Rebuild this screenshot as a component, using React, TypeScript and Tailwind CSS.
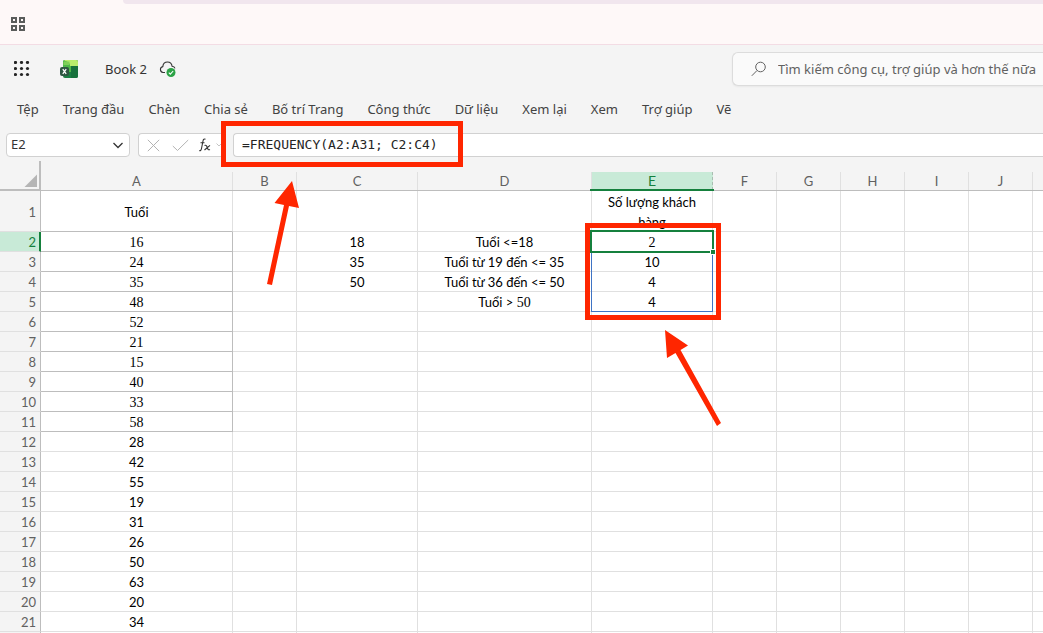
import type { ReactNode } from "react";

const MENU = [
  "Tệp",
  "Trang đầu",
  "Chèn",
  "Chia sẻ",
  "Bố trí Trang",
  "Công thức",
  "Dữ liệu",
  "Xem lại",
  "Xem",
  "Trợ giúp",
  "Vẽ",
];

const COLUMNS = ["A", "B", "C", "D", "E", "F", "G", "H", "I", "J", ""];

const AGES = [
  16, 24, 35, 48, 52, 21, 15, 40, 33, 58, 28, 42, 55, 19, 31, 26, 50, 63, 20, 34,
];

const CELLS: Record<string, ReactNode> = {
  A1: "Tuổi",
  C2: "18",
  C3: "35",
  C4: "50",
  D2: "Tuổi <=18",
  D3: "Tuổi từ 19 đến <= 35",
  D4: "Tuổi từ 36 đến <= 50",
  D5: (
    <>
      Tuổi &gt; <span className="font-['Liberation_Serif',serif] text-sm leading-none">50</span>
    </>
  ),
  E1: "Số lượng khách hàng",
  E2: <span className="font-['Liberation_Serif',serif] text-sm leading-none">2</span>,
  E3: "10",
  E4: "4",
  E5: "4",
};

const ROWS = Array.from({ length: 22 }, (_, i) => i + 1);

function cellContent(column: string, row: number): ReactNode {
  if (column === "A" && row > 1) return AGES[row - 2];
  return CELLS[column + row];
}

function cellClass(column: string, row: number) {
  const base = "border-r border-b p-0 text-center font-normal";
  if (column === "A" && row > 1 && row < 12) {
    return `${base} border-[#bdbdbd] font-['Liberation_Serif',serif] text-sm`;
  }
  if (column === "A" && row === 1) {
    return `${base} border-r-[#e0e0e0] border-b-[#bdbdbd]`;
  }
  return `${base} border-[#e0e0e0]`;
}

function Selection() {
  return (
    <>
      <span className="pointer-events-none absolute -top-px left-[-1px] h-[81px] w-[122px] border border-[#3f74c4]" />
      <span className="pointer-events-none absolute -top-[2px] -left-[2px] h-[23px] w-[124px] border-2 border-[#15803d]" />
      <span className="pointer-events-none absolute top-[17px] left-[118px] size-[6px] border border-white bg-[#15803d]" />
    </>
  );
}

function Sheet() {
  return (
    <table className="w-full table-fixed border-separate border-spacing-0 bg-white font-[Lato,'Noto_Sans',sans-serif] text-[13px] leading-5 text-black">
      <colgroup>
        <col className="w-[41px]" />
        <col className="w-48" />
        <col className="w-16" />
        <col className="w-[121px]" />
        <col className="w-[174px]" />
        <col className="w-[121px]" />
        {COLUMNS.slice(5).map((c) => (
          <col key={c} className="w-16" />
        ))}
      </colgroup>
      <thead>
        <tr className="h-[30px] bg-[#f4f4f4] text-[#616161]">
          <th className="border-r-2 border-b-2 border-[#bdbdbd] p-0 align-bottom">
            <svg className="mr-0.5 mb-0.5 ml-auto block" width="13" height="13" viewBox="0 0 13 13" aria-hidden="true">
              <path d="M13 0.500V13H0.500Z" fill="#b5b5b5" />
            </svg>
          </th>
          {COLUMNS.map((c) => (
            <th key={c} className="border-b border-[#bdbdbd] p-0 align-bottom font-normal">
              {c === "E" ? (
                <div className="relative h-[18px] border-r border-dashed border-[#a9bdb1] bg-[#c8ead7] text-sm leading-[18px] text-[#15803d]">
                  E
                  <span className="absolute -right-0.5 -bottom-px -left-0.5 h-0.5 bg-[#15803d]" />
                </div>
              ) : (
                <div className="h-[18px] border-r border-[#e0e0e0] text-[13px] leading-[18px]">{c}</div>
              )}
            </th>
          ))}
        </tr>
      </thead>
      <tbody>
        {ROWS.map((r) => (
          <tr key={r} className={r === 1 ? "h-[41px]" : "h-5"}>
            <th
              className={
                r === 2
                  ? "border-r-2 border-b border-r-[#15803d] border-b-[#e0e0e0] bg-[#c8ead7] p-0 pr-[3px] text-right text-[13px] font-normal text-[#15803d]"
                  : "border-r border-b border-r-[#bdbdbd] border-b-[#e0e0e0] bg-[#f4f4f4] p-0 pr-1 text-right text-[13px] font-normal text-[#616161]"
              }
            >
              <div className="h-[19px] leading-[21px]">{r < 22 && r}</div>
            </th>
            {COLUMNS.map((c) => (
              <td key={c} className={cellClass(c, r)}>
                <div
                  className={
                    r === 1
                      ? "flex max-h-10 items-center justify-center overflow-hidden px-2 pt-px leading-5"
                      : "relative h-[19px] leading-[21px]"
                  }
                >
                  {cellContent(c, r)}
                  {c === "E" && r === 2 && <Selection />}
                </div>
              </td>
            ))}
          </tr>
        ))}
      </tbody>
    </table>
  );
}

function ExcelLogo() {
  return (
    <svg width="19" height="18" viewBox="0 0 19 18" aria-hidden="true">
      <rect x="3" y="0" width="15" height="18" rx="2" fill="#1a7f43" />
      <path d="M5 0H16a2 2 0 0 1 2 2V6H11V12H3V2a2 2 0 0 1 2-2Z" fill="#4fb848" />
      <path d="M5 0H16a2 2 0 0 1 2 2V6H10V4Q8 1 4 0.500Z" fill="#b9ec6c" />
      <path d="M3.500 1.500H9.500V5H3.500Z" fill="#7fd058" />
      <path d="M11 6H18V16a2 2 0 0 1-2 2H11Z" fill="#17713c" />
      <rect x="0" y="7" width="9" height="9" rx="2" fill="#2d5741" />
      <path d="M2.800 9.200L6.200 13.800M6.200 9.200L2.800 13.800" stroke="#fff" strokeWidth="1.300" />
    </svg>
  );
}

function SavedCloud() {
  return (
    <svg width="18" height="17" viewBox="0 0 18 17" aria-hidden="true">
      <path d="M6 11.500H4A3 3 0 0 1 3.800 5.600C4.100 2.600 6 1 8.500 1s4.300 1.700 4.600 4.300c1.500.1 2.500.8 2.900 2" fill="none" stroke="#333" strokeWidth="1.100" />
      <circle cx="12" cy="11.500" r="4.500" fill="#2ba245" />
      <path d="M9.800 11.700L11.300 13.200L14.200 10" fill="none" stroke="#fff" strokeWidth="1.100" />
    </svg>
  );
}

function Annotations() {
  return (
    <svg className="pointer-events-none absolute top-0 left-0" width="740" height="440" viewBox="0 0 740 440" aria-hidden="true">
      <rect x="223.500" y="123.500" width="237" height="41" fill="none" stroke="#ff2600" strokeWidth="5" />
      <rect x="587.500" y="225.500" width="131" height="92" fill="none" stroke="#ff2600" strokeWidth="5" />
      <path d="M292 181L299 208L289 206L272 285L267 284L284 205L274.500 203Z" fill="#ff2600" />
      <path d="M665 330L688 345.500L680.500 350L721 423L717 426L675.500 353L667 358Z" fill="#ff2600" />
    </svg>
  );
}

export default function App() {
  return (
    <div className="relative flex h-screen flex-col overflow-hidden bg-[#f4f4f4] font-['Noto_Sans','Open_Sans',sans-serif] text-[#424242]">
      <div className="flex h-[45px] shrink-0 flex-col border-b border-[#f3dce4] bg-[#fef8f8]">
        <div className="ml-[123px] h-1 rounded-bl-lg bg-[#f1e6ee]" />
        <button className="mt-[13px] ml-[11px] grid size-[14px] grid-cols-2 gap-0.5" aria-label="Tab">
          <span className="size-[6px] border-2 border-[#5a5c5b]" />
          <span className="size-[6px] border-2 border-[#5a5c5b]" />
          <span className="size-[6px] border-2 border-[#5a5c5b]" />
          <span className="size-[6px] border-2 border-[#5a5c5b]" />
        </button>
      </div>

      <header className="flex h-12 shrink-0 items-center pl-[14px]">
        <button aria-label="Menu">
          <svg width="16" height="16" viewBox="0 0 16 16" fill="#242424" aria-hidden="true">
            {[1.5, 7.5, 13.5].map((y) => [1.5, 7.5, 13.5].map((x) => <circle key={`${x}-${y}`} cx={x} cy={y} r="1.600" />))}
          </svg>
        </button>
        <div className="ml-[30px]">
          <ExcelLogo />
        </div>
        <h1 className="ml-[26px] pt-0.5 text-[13px] text-[#333333]">Book 2</h1>
        <button className="ml-3" aria-label="Saved">
          <SavedCloud />
        </button>
        <label className="ml-auto flex h-[34px] w-[311px] items-center rounded-l-md border border-r-0 border-[#dcdcdc] bg-[#fafafa] pl-[18px] shadow-xs">
          <svg width="16" height="16" viewBox="0 0 16 16" fill="none" stroke="#616161" aria-hidden="true">
            <circle cx="9.500" cy="6" r="4.800" />
            <path d="M6 9.500L0.800 14.800" />
          </svg>
          <input
            className="ml-[11px] min-w-0 flex-1 bg-transparent pt-0.5 text-[13px] outline-none placeholder:text-[#616161]"
            placeholder="Tìm kiếm công cụ, trợ giúp và hơn thế nữa"
            aria-label="Tìm kiếm"
          />
        </label>
      </header>

      <nav className="flex h-[34px] shrink-0 items-center gap-6 pl-[17px] text-[13px] whitespace-nowrap">
        {MENU.map((item) => (
          <button key={item}>{item}</button>
        ))}
      </nav>

      <div className="flex h-[34px] shrink-0 items-center pt-0.5 pl-[6px]">
        <div className="flex h-6 w-[124px] items-center rounded-sm border border-[#d1d1d1] bg-white pr-1.5 pl-1">
          <input className="min-w-0 flex-1 text-[13px] text-[#333333] outline-none" defaultValue="E2" aria-label="Name box" />
          <svg width="10" height="7" viewBox="0 0 10 7" fill="none" stroke="#333" strokeWidth="1.300" aria-hidden="true">
            <path d="M0.500 1L5 5.500L9.500 1" />
          </svg>
        </div>
        <div className="ml-2 flex h-6 w-[88px] items-center rounded-l-sm border border-r-0 border-[#d1d1d1] bg-white pl-2">
          <button aria-label="Cancel">
            <svg width="13" height="13" viewBox="0 0 13 13" stroke="#b3b3b3" aria-hidden="true">
              <path d="M0.800 0.800L12.200 12.200M12.200 0.800L0.800 12.200" />
            </svg>
          </button>
          <button className="ml-3" aria-label="Enter">
            <svg width="17" height="13" viewBox="0 0 17 13" fill="none" stroke="#b3b3b3" aria-hidden="true">
              <path d="M0.800 7L5.500 11.500L16.200 1" />
            </svg>
          </button>
          <button className="ml-[10px]" aria-label="Insert function">
            <svg width="12" height="14" viewBox="0 0 12 14" fill="none" stroke="#333" strokeWidth="1.100" aria-hidden="true">
              <path d="M0.300 12.500C1.500 13 2.200 12 2.500 10.500L4 3C4.300 1.400 5.200 0.700 6.500 1.200M1.500 4.800H5.500" />
              <path d="M5.500 7.500C7.200 6.800 7.700 8 8.200 9.500S9.200 12.300 11 11.500M11 7.300L5.500 12" />
            </svg>
          </button>
          <svg className="ml-[5px]" width="6" height="4" viewBox="0 0 6 4" fill="none" stroke="#c4c4c4" aria-hidden="true">
            <path d="M0.500 0.500L3 3L5.500 0.500" />
          </svg>
        </div>
        <input
          className="ml-[7px] h-6 min-w-0 flex-1 rounded-l-sm border border-r-0 border-[#d1d1d1] bg-white pb-0.5 pl-2 font-['DejaVu_Sans_Mono',monospace] text-[13px] text-[#242424] outline-none"
          defaultValue="=FREQUENCY(A2:A31; C2:C4)"
          aria-label="Formula"
        />
      </div>

      <main className="min-h-0 flex-1 overflow-hidden">
        <Sheet />
      </main>

      <Annotations />
    </div>
  );
}
